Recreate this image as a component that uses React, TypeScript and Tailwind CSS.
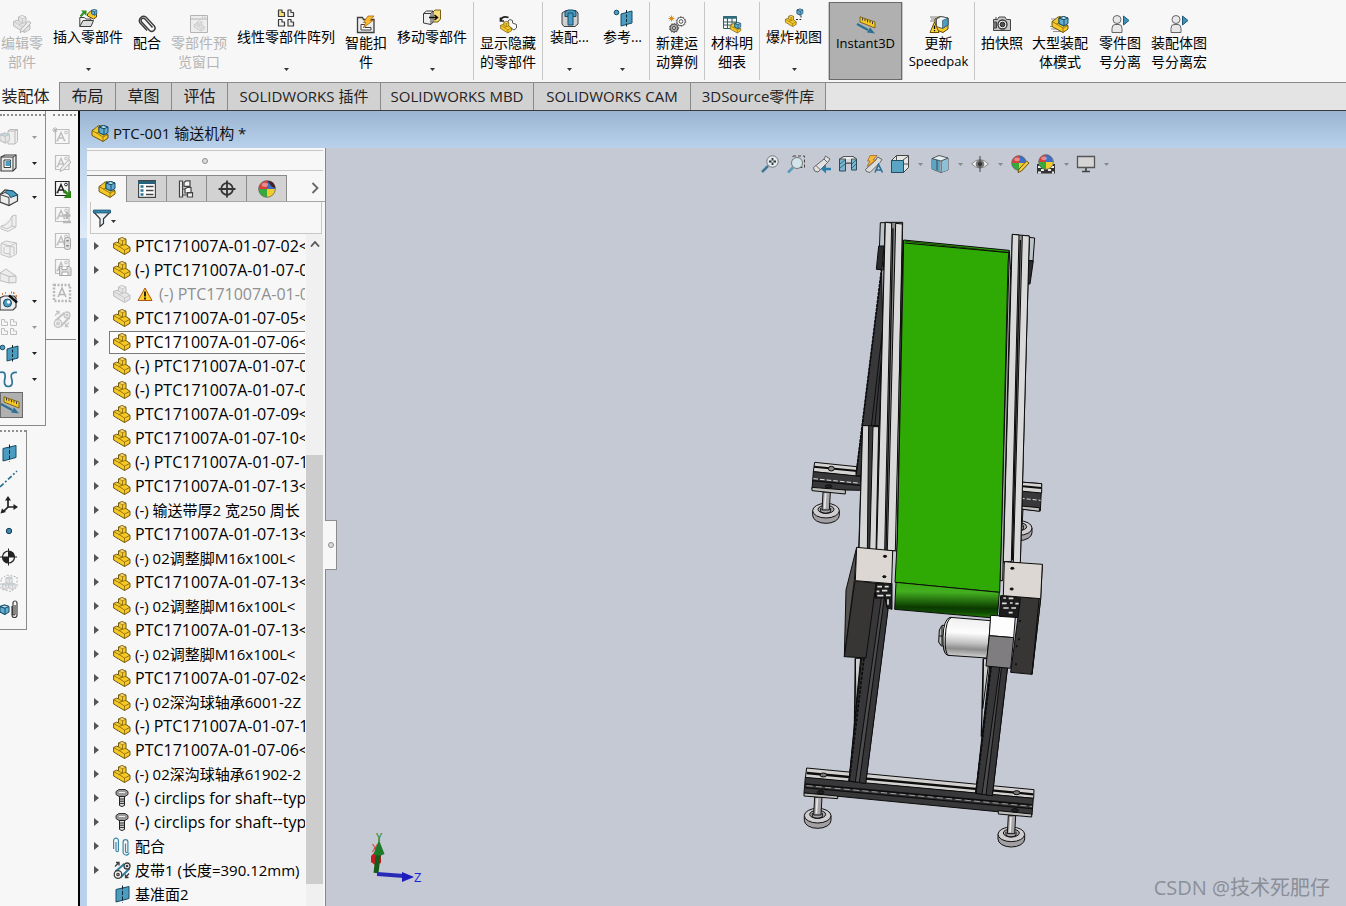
import type { ReactNode } from 'react'
import clsx from 'clsx'

const ink = '#3c3c3c'
const blue = '#4a9cc0'
const gold = '#f6c927'
const goldInk = '#5f4706'
const ghost = '#c4c4c4'

function Part({ muted = false }: { muted?: boolean }) {
  return (
    <g stroke={muted ? '#b5b5b5' : goldInk} strokeLinejoin="round">
      <path
        d="M5.500 2 9 .6 13 2.200V7.500l4 2.800v4L11.500 17.500 .6 11V6.500l3-1.300 1.900.6z"
        fill={muted ? '#e4e4e4' : gold}
        strokeWidth=".9"
      />
      <path d="M5.500 2 9 .6 13 2.200 9.500 3.600z" fill={muted ? '#f2f2f2' : '#fde178'} strokeWidth=".5" />
      <path d="M9.500 3.600v4.600L5.500 6M9.500 8.200 6 9.500 .6 6.500M9.500 8.200 13 7.500M6 9.500l5.500 3.500 5.500-2.700M11.500 13v4.500" fill="none" strokeWidth=".6" />
    </g>
  )
}

function Cube({ x = 0, y = 0, s = 1, fill = '#62add0', line = '#164d6b' }) {
  return (
    <g transform={`translate(${x} ${y}) scale(${s})`} stroke={line} strokeLinejoin="round">
      <path d="M0 1.500 4.500 0 9 1.500V7L5 9.500 0 7z" fill={fill} />
      <path d="M0 1.500 5 3.200v6.300L0 7z" fill={fill} />
      <path d="M0 1.500 4.500 0 9 1.500 5 3.200z" fill="#b9e0ef" />
    </g>
  )
}

const GhostCube = ({ x = 0, y = 0, s = 1 }) => <Cube x={x} y={y} s={s} fill="#e6e6e6" line={ghost} />

function Assembly() {
  return (
    <>
      <path d="M1 6.500 3.500 5 6 2.500 9 1.500l3 1.500v6l5 1.500V14l-5 3.500L1 11.500z" fill={gold} stroke={goldInk} strokeWidth=".9" strokeLinejoin="round" />
      <path d="M1 6.500 5.500 9 8 8M5.500 9l6.500 4 5-2.500M12 13v4.500" fill="none" stroke={goldInk} strokeWidth=".6" />
      <Cube x={8} y={1.5} />
    </>
  )
}

function Plane({ x = 0 }) {
  return (
    <g transform={`translate(${x} 0)`}>
      <path d="M3 4.500 16 1.500v12L3 17z" fill={blue} stroke="#1b4a63" />
      <path d="M9.500.5v17" stroke="#0f2735" strokeDasharray="4 1.500" />
    </g>
  )
}

function Ruler() {
  return (
    <>
      <path d="M3 .8 18 6v6L3 6z" fill={gold} stroke="#6a5212" strokeWidth=".8" />
      <path d="M5.500 2v2.500M8 3v2M10.500 3.800v2.500M13 4.700v2M15.500 5.600v2.500" stroke={ink} />
      <path d="M0 8l11 6" stroke="#2a6f96" strokeWidth="2" />
      <path d="M18 17.500l-8-1 3-5z" fill="#2a6f96" />
    </>
  )
}

function Mates() {
  return (
    <g fill="none" stroke="#3d87a8" strokeWidth="1.200">
      <path d="M3 5v8.500a1.200 1.200 0 002.400 0V3.500a2.400 2.400 0 00-4.800 0V12" />
      <path d="M12.500 6.500v8a1.200 1.200 0 002.400 0V5a2.400 2.400 0 00-4.800 0v9.500a3 3 0 006 1" />
    </g>
  )
}

function Belt({ muted = false }: { muted?: boolean }) {
  const c = muted ? ghost : ink
  const band = muted ? ghost : '#2f7c9f'
  return (
    <g fill="none" stroke={c} strokeWidth="1.300">
      <path d="M2.500 10.500 11.500 2.800M7.500 16.500l9-9" stroke={band} strokeWidth="2" />
      <circle cx="5" cy="13.500" r="3.800" fill={muted ? '#eee' : '#f4f4f4'} />
      <circle cx="5" cy="13.500" r="1.200" />
      <circle cx="14" cy="5" r="3" fill={muted ? '#eee' : '#f4f4f4'} />
      <circle cx="14" cy="5" r=".7" />
      <path d="M2 5.500 6 1.500M3 1.500h3v3M16 12.500l-3.500 4M12.500 13.500v3h3" />
    </g>
  )
}

function Clip({ x = 0 }) {
  return (
    <g transform={`translate(${x} 0)`} fill="none" stroke={ink} strokeWidth="1.200">
      <path d="M1 6v9a2.500 2.500 0 005 0V3a2 2 0 00-4 0v11a1 1 0 002 0V5" />
    </g>
  )
}

function Note({ c = '#bebebe', children }: { c?: string; children?: ReactNode }) {
  return (
    <>
      <path d="M2.500 1.500H16v14H2.500z" fill="none" stroke={c} strokeWidth="1.200" />
      <path d="M4.500 12.500 8 4.500l3.500 8M5.500 10h5M3.500 12.500h2M10.500 12.500h2" fill="none" stroke={c} strokeWidth="1.500" />
      <circle cx="13" cy="4.500" r="1.400" fill="none" stroke={c} />
      {children}
    </>
  )
}

function Ball({ x = 9, y = 9, r = 8 }) {
  return (
    <g transform={`translate(${x} ${y}) scale(${r / 8})`}>
      <path d="M0 0V-8A8 8 0 00-8 0z" fill="#d9403c" />
      <path d="M0 0V-8A8 8 0 018 0z" fill="#3e6fc4" />
      <path d="M0 0H-8A8 8 0 000 8z" fill="#35a93a" />
      <path d="M0 0H8A8 8 0 010 8z" fill="#f0cd2c" />
      <circle r="7.800" fill="none" stroke="#6b6b6b" strokeWidth=".8" />
      <ellipse cx="-2" cy="-4" rx="3" ry="2" fill="#fff" opacity=".4" />
    </g>
  )
}

function Person() {
  return (
    <>
      <circle cx="6" cy="4.500" r="4" fill="#e8e8e8" stroke="#666" />
      <path d="M1 17.500v-4Q1 9.500 4 9.500h4q3 0 3 4v4z" fill="#e8e8e8" stroke="#666" />
      <path d="M12.500 1 18 5.500 12.500 10z" fill="#3e92b8" stroke="#215a78" />
    </>
  )
}

function Pencil({ muted = true }: { muted?: boolean }) {
  return (
    <path d="M7 17.500l1-3.500 7.500-8 2.500 2-7.500 8z" fill={muted ? '#ececec' : '#f4cb3e'} stroke={muted ? '#b4b4b4' : '#6d5314'} />
  )
}

const glyphs: Record<string, ReactNode> = {
  part: <Part />,
  partMuted: <Part muted />,
  assembly: <Assembly />,
  editPart: (
    <>
      <Part muted />
      <Pencil />
    </>
  ),
  insert: (
    <>
      <path d="M.8 17.500V8.500h4.500l1.500 1.500h5v2" fill="#f5f5f5" stroke={ink} />
      <path d="M.8 17.500 4 11.500h10.500l-2.500 6z" fill="#ddd" stroke={ink} />
      <path d="M1.500 7.500 5 3.500" stroke="#2e9420" strokeWidth="2" />
      <path d="M2 1.500h5.500V7z" fill="#2e9420" />
      <path d="M8.500 5 12 1.500l5.500 1.500v5L14.500 10 8.500 7z" fill={gold} stroke={goldInk} />
      <Cube x={12.500} y={0.5} s={0.6} />
    </>
  ),
  clip: (
    <path d="M14.500 12.500 7 4a2.200 2.200 0 00-3.300 3l7.800 8.500a3.300 3.300 0 004.800-4.500L8 2A4.400 4.400 0 001.700 7.500L9 15.500" fill="none" stroke={ink} strokeWidth="1.400" />
  ),
  preview: (
    <>
      <path d="M.5.5h17v17H.5zM.5 4h17" fill="#ededed" stroke="#b4b4b4" />
      <path d="M12 2.200h1M14.500 2.200h1" stroke="#aaa" />
      <g transform="translate(4 5.500) scale(.6)"><Part muted /></g>
    </>
  ),
  pattern: (
    <g stroke={ink} strokeWidth="1.200" strokeLinejoin="round">
      <path d="M1.500 1h3.500v2.500h2.500v4h-6z" fill="#f8dc74" />
      <path d="M11 1h3v2.500h2.500v4H11zM1.500 10.500h3.500V13h2.500v4h-6zM11 10.500h3V13h2.500v4H11z" fill="#f2f2f2" />
    </g>
  ),
  patternMuted: (
    <path d="M1.500 1.500h3V4h3v3.500h-6zM10.500 1.500h3V4h3v3.500h-6zM1.500 10.500h3V13h3v3.500h-6zM10.500 10.500h3V13h3v3.500h-6z" fill="none" stroke="#bdbdbd" />
  ),
  fastener: (
    <>
      <path d="M.5 2.500h5l1 2h10.500v13H.5z" fill="#ececec" stroke={ink} strokeWidth="1.300" />
      <path d="M4 9.500h4v3h6V15H4z" fill="#fff" stroke={ink} />
      <path d="M11 1h6l-4 4.500h3L6 13l3-5.500H6.500z" fill="#f8bd2f" stroke="#b0641b" strokeWidth=".8" />
    </>
  ),
  move: (
    <>
      <path d="M9 4l3-3h5.500v9L15 13H9z" fill="#f5dc7c" stroke="#7b5f14" />
      <path d="M.5 4.500l3-2.500h6.500v11L8 15.500.5 14z" fill="#eee" stroke={ink} />
      <path d="M.5 4.500H8V15M8 4.500l2-2.500" fill="none" stroke={ink} />
      <path d="M6 8.500h8M11.500 6l3 2.500-3 2.500" fill="none" stroke="#111" strokeWidth="1.500" />
    </>
  ),
  showHide: (
    <>
      <path d="M2 6V4.500Q4 .5 9.500 2.500M1.500 2.500V6H5" fill="none" stroke="#222" strokeWidth="1.700" />
      <path d="M9 6l2-1.500 2.500 1V8l4 1.500v3.500L15 15l-6-4z" fill="#fafafa" stroke="#555" />
      <g transform="translate(1 6) scale(.68)"><Part /></g>
    </>
  ),
  features: (
    <>
      <path d="M1 4l4-2.500h10L17 4v11l-3 2.500H3L1 15z" fill="#cfcfcf" stroke={ink} />
      <path d="M4 3l3-2h5l3 2v4.500h-3V16H7V7.500H4z" fill={blue} stroke="#164d6b" />
      <path d="M7 7.500V4h5v3.500" fill="none" stroke="#164d6b" />
    </>
  ),
  reference: (
    <>
      <circle cx="2.500" cy="3.500" r="2.300" fill={blue} stroke="#1b4a63" />
      <path d="M7 5 18 2v12L7 17z" fill={blue} stroke="#1b4a63" />
      <path d="M12.500 1v16.500" stroke="#0f2735" strokeDasharray="3 1.500" />
    </>
  ),
  motion: (
    <>
      <circle cx="13" cy="6.500" r="4.200" fill="#f4f4f4" stroke="#555" />
      <circle cx="13" cy="6.500" r="4.800" fill="none" stroke="#666" strokeDasharray="1.500 1.500" />
      <circle cx="13" cy="6.500" r="1.800" fill="#fff" stroke="#555" />
      <circle cx="6" cy="13" r="4" fill="#a5a5a5" stroke="#555" />
      <circle cx="6" cy="13" r="4.600" fill="none" stroke="#555" strokeDasharray="1.500 1.500" />
      <circle cx="6" cy="13" r="1.500" fill="#eee" stroke="#444" />
      <path d="M3.500.5v6M.5 3.500h6M1.500 1.500l4 4M5.500 1.500l-4 4" stroke="#e08a1e" />
    </>
  ),
  bom: (
    <>
      <path d="M.5 1.500h13v12H.5z" fill="#f2f7f7" stroke="#3b5a5e" />
      <path d="M.5 2.500h13" stroke="#2e6f7f" strokeWidth="2.500" />
      <path d="M.5 7h13M.5 10h13M4.500 3v10.500M9 3v10.500" stroke="#3b5a5e" />
      <g transform="translate(6.500 6.500) scale(.66)"><Assembly /></g>
    </>
  ),
  explode: (
    <>
      <g transform="translate(0 6) scale(.66)"><Part /></g>
      <path d="M11 10.500h5V6" fill="none" stroke="#222" strokeDasharray="2 1.500" />
      <Cube x={12} y={0} s={0.65} />
    </>
  ),
  ruler: <Ruler />,
  speedpak: (
    <>
      <path d="M0 2h9M1 4h6M0 6h5" stroke="#666" strokeWidth=".8" />
      <path d="M5 4l5-2.500L18 3v11l-5 3.500-8-3z" fill={gold} stroke={goldInk} />
      <path d="M6.500 4l4.500-2.500 7 1.500v7l-5.500 3.500-6-2z" fill="#eef5f8" stroke="#345" strokeWidth=".8" />
      <path d="M12.500 5.500 18 3v7l-5.500 3.500z" fill={blue} stroke="#345" strokeWidth=".6" />
      <path d="M4.500 7 9 17.500H0z" fill="#fcd83a" stroke="#6d4b00" />
      <path d="M4.500 10.500v3.500M4.500 15v1.200" stroke="#000" strokeWidth="1.300" />
    </>
  ),
  camera: (
    <>
      <path d="M.5 4.500h4L6 2h6l1.500 2.500h4v11H.5z" fill="#c9c9c9" stroke="#444" />
      <path d="M2 3h2M.5 7h3v6h-3" stroke="#444" fill="#777" />
      <circle cx="9.500" cy="9.500" r="4.500" fill="#eee" stroke="#333" strokeWidth="1.300" />
      <circle cx="9.500" cy="9.500" r="2.300" fill="#555" stroke="#222" />
    </>
  ),
  largeAsm: (
    <>
      <path d="M0 4h6M-1 11.500h6M0 14h8M2 16.500h8" stroke="#777" strokeWidth=".8" />
      <Assembly />
    </>
  ),
  person: <Person />,
  solidMuted: (
    <>
      <path d="M8 3l2-1.500h7.500v12L15 16H8z" fill="#efefef" stroke="#bbb" />
      <path d="M8 3h7v13M15 3l2.500-1.500" fill="none" stroke="#bbb" />
      <GhostCube x={0} y={5} s={1.05} />
    </>
  ),
  window: (
    <>
      <path d="M1 3l4-2h11v13l-3 3H1z" fill="#e9e9e9" stroke={ink} strokeWidth="1.200" />
      <path d="M1 3h12v14M13 3l3-2" fill="none" stroke={ink} />
      <path d="M4 6h6.500v7.500H4z" fill="#fff" stroke={ink} />
      <path d="M5.500 7h5v5h-5z" fill={blue} />
    </>
  ),
  fillet: (
    <>
      <path d="M0 6.500 5 2l8 1 4.500 4v6L9 17.500 0 14z" fill="#ececec" stroke={ink} strokeWidth="1.200" />
      <path d="M7 2.200 13 3l4.500 4-7 2.500Q9.500 5.500 5 4.500z" fill={blue} stroke="#1b4a63" />
      <path d="M0 6.500 9 9.500v8M5 4.500 0 6.500" fill="none" stroke={ink} />
    </>
  ),
  ribMuted: <path d="M1 12Q9 11 12 2l4-1v12l-8 4.500L1 15zM12 2v10l-5 3-6-3M12 12l4 1" fill="#efefef" stroke={ghost} />,
  shellMuted: <path d="M1 3.500 6 1l10.500 2v11L10 17.500 1 14.500zM1 3.500 10 6v11.500M10 6l6.500-3M4 7v6l6 1M5 6l9 1v7" fill="#efefef" stroke={ghost} />,
  draftMuted: <path d="M0 7l6-4 10 7v6.500L9 17 0 14.500zM0 7l9 3.500V17M9 10.500l7-.5" fill="#ececec" stroke="#bdbdbd" />,
  wizard: (
    <>
      <path d="M0 6l4-2h10l2 2v9l-3 3H0z" fill="#eee" stroke={ink} strokeWidth="1.200" />
      <circle cx="7.500" cy="11" r="4" fill={blue} stroke="#1b4a63" />
      <circle cx="8.500" cy="10" r="1.700" fill="#fff" />
      <path d="M9 3.500 17 10.500" stroke="#111" strokeWidth="2.500" />
      <path d="M2 2h1M5 .8h1M13 1h1.500M15.500 4h1.500M11 .5h1" stroke="#e2742b" strokeWidth="1.800" />
    </>
  ),
  curve: <path d="M0 2.500Q6 .5 5 8q-2 8 3 8.500 6 0 3.500-8.500Q10 2 17 2.500" fill="none" stroke="#2f7498" strokeWidth="1.700" />,
  noteNew: <Note><path d="M2 -1v6M-1 2h6M0 0l4 4M4 0L0 4" stroke="#b0b0b0" strokeWidth=".8" /></Note>,
  noteEdit: <Note><Pencil /></Note>,
  noteAdd: (
    <Note c="#222">
      <path d="M11 10.500l3.500 3.500" stroke="#2a8a10" strokeWidth="2.500" />
      <path d="M18 10.500v7.500h-7.500z" fill="#2a8a10" />
    </Note>
  ),
  notePlus: <Note><path d="M14 6v7M10.500 9.500h7M10 16h8" stroke="#b6b6b6" strokeWidth="2.300" /></Note>,
  noteLight: (
    <Note>
      <rect x="11.500" y="5.500" width="6" height="12" rx="2" fill="#ddd" stroke="#a8a8a8" />
      <path d="M14.500 8v1.500M14.500 13v1.500" stroke="#888" strokeWidth="2.500" />
    </Note>
  ),
  noteSave: (
    <Note>
      <path d="M6.500 8.500h10l1.500 1.500v7.500H6.500z" fill="#ddd" stroke="#a8a8a8" />
      <path d="M9 8.500v3h5v-3M9 17v-3h6v3" fill="#fff" stroke="#a8a8a8" />
    </Note>
  ),
  noteStamp: (
    <>
      <path d="M1 1h16v16H1z" fill="none" stroke="#b8b8b8" strokeWidth="2.500" strokeDasharray="2 1.500" />
      <path d="M5 13l4-9 4 9M6 10.500h6" fill="none" stroke="#b4b4b4" strokeWidth="1.500" />
    </>
  ),
  beltMuted: <Belt muted />,
  belt: <Belt />,
  plane: <Plane />,
  axis: <path d="M0 17 17 1" stroke="#2a6f96" strokeWidth="1.700" strokeDasharray="5 2 2 2" />,
  coords: (
    <>
      <path d="M8 11V3M8 11h7M8 11l-5 5" stroke="#222" strokeWidth="1.700" />
      <path d="M8 0l3 4.500H5zM18 11l-4.500 3V8zM.5 17.500l1.500-5 4 3.500z" fill="#222" />
    </>
  ),
  point: <circle cx="9" cy="9" r="2.700" fill="#3f86a8" stroke="#163f57" />,
  mass: (
    <>
      <circle cx="8.500" cy="9" r="6" fill="#f4f4f4" stroke="#222" strokeWidth="1.200" />
      <path d="M8.500 9V3a6 6 0 016 6zM8.500 9v6a6 6 0 01-6-6z" fill="#222" />
      <path d="M8.500.5v17M0 9h17" stroke="#222" />
    </>
  ),
  boxMuted: (
    <>
      <path d="M1 5l6-4 10 2v10l-6 4.500L1 15z" fill="none" stroke="#b4b4b4" strokeDasharray="2 1.500" />
      <GhostCube x={6} y={3} s={0.7} />
      <GhostCube x={2.500} y={9} s={0.7} />
      <GhostCube x={9} y={9} s={0.7} />
    </>
  ),
  cubeClip: (
    <>
      <Cube x={0} y={5} />
      <Clip x={11} />
    </>
  ),
  propTab: (
    <>
      <path d="M.6.6h16.800v16.800H.6z" fill="#fff" stroke="#444" strokeWidth="1.200" />
      <path d="M0 2.500h18" stroke="#26617c" strokeWidth="3" />
      <path d="M2.500 6.500h3M2.500 10.500h3M2.500 14.500h3" stroke="#2c7697" strokeWidth="2.500" />
      <path d="M8 6.500h7.500M8 10.500h7.500M8 14.500h7.500" stroke="#444" strokeWidth="1.300" />
    </>
  ),
  configTab: (
    <g fill="#f6f6f6" stroke="#444" strokeWidth="1.200">
      <path d="M3 9h5M3 15h7" fill="none" />
      <path d="M1.500 1h3v16h-3z" />
      <path d="M6 2.500 8 .8h4v5.500H6zM7 9l2-1.500h4V13H7zM9.500 12.500h5V17h-5z" />
    </g>
  ),
  dimTab: (
    <g fill="none" stroke="#333" strokeWidth="1.800">
      <circle cx="9" cy="9" r="5.800" />
      <path d="M9 .5v17M.5 9h17" />
    </g>
  ),
  displayTab: (
    <>
      <Ball r={8.5} />
      <path d="M9.500 1Q16 0 17.500 8l-3.500-1z" fill="#4a2020" />
    </>
  ),
  bolt: (
    <>
      <path d="M3 2.500 6 .5h6l3 2v3L12 7.500H6L3 5.500z" fill="#9a9a9a" stroke="#333" />
      <path d="M6 3.500h6" stroke="#eee" />
      <path d="M6.500 7.500h5v9L9 17.500l-2.500-1z" fill="#ddd" stroke="#222" />
      <path d="M6.500 10h5M6.500 12.200h5M6.500 14.400h5" stroke="#222" />
    </>
  ),
  mates: <Mates />,
  funnel: (
    <>
      <path d="M.8 3 7 9.800V17.500l3.500-3V9.800L17 3z" fill="#e9f0f3" stroke="#333" strokeWidth="1.200" />
      <path d="M.5 1h17v3H.5z" fill="#3285ad" stroke="#1b4a63" strokeWidth=".7" />
    </>
  ),
  zoomFit: (
    <>
      <circle cx="11.500" cy="6.500" r="5.700" fill="#e3ecf2" stroke="#777" />
      <path d="M11.500 3v7M8 6.500h7" stroke="#333" strokeDasharray="2.500 2" strokeWidth="1.800" />
      <path d="M7 11 1 17" stroke="#3d7897" strokeWidth="2.500" />
    </>
  ),
  zoomArea: (
    <>
      <path d="M6 1h11.500v11.500H6z" fill="none" stroke="#444" strokeDasharray="3 2" />
      <circle cx="10" cy="8" r="5.500" fill="#d3e3ea" stroke="#777" />
      <path d="M6 12.500 1 17.500" stroke="#5b9abb" strokeWidth="2.500" />
    </>
  ),
  prevView: (
    <>
      <path d="M.5 12.500 11 4l1.500-3 4.500 3-2 3L5 17l-3.500-1z" fill="#e2e2e2" stroke="#666" />
      <path d="M11 4l3.500 3.500M3 10.500l4.500 4.500" stroke="#666" />
      <path d="M12 14h6" stroke="#2a7dab" strokeWidth="2.500" />
      <path d="M8 14l5-4.500v9z" fill="#2a7dab" />
    </>
  ),
  section: (
    <>
      <path d="M.5 4 5 1.500h9L17.500 4v11h-5V8h-6v8H.5z" fill="#7fb3cb" stroke="#2b4a5a" />
      <path d="M.5 4 5 1.500h9L17.500 4h-5l-1.500 1H8L6.500 4z" fill="#eee" stroke="#444" strokeWidth=".8" />
      <path d="M6.500 4v4h6V4" fill="#d8d8d8" stroke="#444" />
      <path d="M1 9l5-4M1 13l5-4M13 9l4-4M13 13l4-4" stroke="#2a6d8e" />
    </>
  ),
  annotate: (
    <>
      <path d="M.5 14.500 11 5l1.500-3L17 4.500l-2 3L5 17.500l-3.500-1z" fill="#ddd" stroke="#666" />
      <path d="M5 .5h7L8 5h3l-9 6.500L5 6H2.500z" fill="#f6b93b" stroke="#a8681e" strokeWidth=".8" />
      <path d="M10 17.500l3.500-8 4 8M11.500 15h4.500" fill="none" stroke="#2c6d94" strokeWidth="1.600" />
    </>
  ),
  orient: (
    <>
      <path d="M.5 5.500 5.500.5h12v12l-5 5H.5z" fill="#e6e6e6" stroke="#444" />
      <path d="M5.500.5v5M12 5l5.500-4M12 9h5.500" stroke="#555" />
      <path d="M.5 5.500h12v12H.5z" fill="#5ba4c4" stroke="#234f66" />
    </>
  ),
  display: (
    <>
      <path d="M1 3.500 8 .5l9 2.500v12l-7 2.500L1 14z" fill="#e6f0f4" stroke="#333" strokeWidth=".8" />
      <path d="M1 3.500 9 6v11L1 14z" fill="#5ba4c4" />
      <path d="M10 6l7-3v12l-7 2.500z" fill="#8cc0d6" />
      <path d="M1 3.500 10 6v11.500M10 6l7-3M6 5V15.500" fill="none" stroke="#333" strokeWidth=".8" />
    </>
  ),
  eye: (
    <>
      <path d="M.5 9Q9 0 17.500 9 9 17 .5 9z" fill="#eee" stroke="#888" />
      <circle cx="9" cy="9" r="4.300" fill="#777" />
      <circle cx="9" cy="9" r="2" fill="#222" />
      <path d="M9 1v16" stroke="#444" />
    </>
  ),
  appearance: (
    <>
      <Ball x={8} y={8} r={7.5} />
      <Pencil muted={false} />
    </>
  ),
  scene: (
    <>
      <path d="M0 9h18v9.500H0z" fill="#333" />
      <path d="M1 12h3M7 12h3M14 12h3M4 15h3M11 15h3M1 17.500h3M15 17.500h2" stroke="#eee" strokeWidth="2" />
      <Ball x={9} y={7} r={7.5} />
    </>
  ),
  monitor: (
    <>
      <path d="M.5 1.500h17v11H.5z" fill="#d5d5d5" stroke="#555" strokeWidth="1.300" />
      <path d="M9 13v3M5 16.500h8" stroke="#444" strokeWidth="1.700" />
    </>
  ),
}

function Icon({ name, className = 'size-[18px]' }: { name: string; className?: string }) {
  return (
    <svg viewBox="0 0 18 18" className={clsx('shrink-0 overflow-visible', className)} aria-hidden="true">
      {glyphs[name]}
    </svg>
  )
}

function Caret({ className = 'text-[#333]' }: { className?: string }) {
  return (
    <svg viewBox="0 0 5 3" className={clsx('h-[3px] w-[5px] shrink-0', className)} aria-hidden="true">
      <path d="M0 0h5L2.500 3z" fill="currentColor" />
    </svg>
  )
}

type RibbonItem = {
  icon: string
  lines: string[]
  width: string
  menu?: boolean
  disabled?: boolean
  active?: boolean
}

const ribbon: RibbonItem[][] = [
  [
    { icon: 'editPart', lines: ['编辑零', '部件'], width: 'w-[44px]', disabled: true },
    { icon: 'insert', lines: ['插入零部件'], width: 'w-[88px]', menu: true },
    { icon: 'clip', lines: ['配合'], width: 'w-[30px]' },
    { icon: 'preview', lines: ['零部件预', '览窗口'], width: 'w-[74px]', disabled: true },
    { icon: 'pattern', lines: ['线性零部件阵列'], width: 'w-[100px]', menu: true },
    { icon: 'fastener', lines: ['智能扣', '件'], width: 'w-[60px]' },
    { icon: 'move', lines: ['移动零部件'], width: 'w-[72px]', menu: true },
  ],
  [{ icon: 'showHide', lines: ['显示隐藏', '的零部件'], width: 'w-[68px]' }],
  [
    { icon: 'features', lines: ['装配...'], width: 'w-[53px]', menu: true },
    { icon: 'reference', lines: ['参考...'], width: 'w-[53px]', menu: true },
  ],
  [{ icon: 'motion', lines: ['新建运', '动算例'], width: 'w-[54px]' }],
  [{ icon: 'bom', lines: ['材料明', '细表'], width: 'w-[54px]' }],
  [{ icon: 'explode', lines: ['爆炸视图'], width: 'w-[68px]', menu: true }],
  [{ icon: 'ruler', lines: ['Instant3D'], width: 'w-[73px]', active: true }],
  [{ icon: 'speedpak', lines: ['更新', 'Speedpak'], width: 'w-[71px]' }],
  [
    { icon: 'camera', lines: ['拍快照'], width: 'w-[54px]' },
    { icon: 'largeAsm', lines: ['大型装配', '体模式'], width: 'w-[62px]' },
    { icon: 'person', lines: ['零件图', '号分离'], width: 'w-[58px]' },
    { icon: 'person', lines: ['装配体图', '号分离宏'], width: 'w-[60px]' },
  ],
]

const commandTabs = [
  { label: '装配体', className: 'w-[60px] text-base bg-[#f7f7f7] -mt-px pr-2' },
  { label: '布局', className: 'w-[56px] text-base' },
  { label: '草图', className: 'w-[56px] text-base' },
  { label: '评估', className: 'w-[56px] text-base' },
  { label: 'SOLIDWORKS 插件', className: 'w-[153px] text-[15px]' },
  { label: 'SOLIDWORKS MBD', className: 'w-[153px] text-[15px]' },
  { label: 'SOLIDWORKS CAM', className: 'w-[157px] text-[15px]' },
  { label: '3DSource零件库', className: 'w-[135px] text-[15px]' },
]

type Tool = { icon: string; label: string; caret?: 'on' | 'off'; rule?: boolean; active?: boolean }

const featureTools: Tool[] = [
  { icon: 'solidMuted', label: '拉伸凸台', caret: 'off' },
  { icon: 'window', label: '拉伸切除', caret: 'on', rule: true },
  { icon: 'fillet', label: '圆角', caret: 'on' },
  { icon: 'ribMuted', label: '筋' },
  { icon: 'shellMuted', label: '抽壳' },
  { icon: 'draftMuted', label: '拔模' },
  { icon: 'wizard', label: '异型孔向导', caret: 'on' },
  { icon: 'patternMuted', label: '线性阵列', caret: 'off' },
  { icon: 'reference', label: '参考几何体', caret: 'on' },
  { icon: 'curve', label: '曲线', caret: 'on' },
  { icon: 'ruler', label: 'Instant3D', active: true },
]

const blockTools: Tool[] = [
  { icon: 'noteNew', label: '制作块' },
  { icon: 'noteEdit', label: '编辑块' },
  { icon: 'noteAdd', label: '插入块' },
  { icon: 'notePlus', label: '添加/移除' },
  { icon: 'noteLight', label: '重建块' },
  { icon: 'noteSave', label: '保存块' },
  { icon: 'noteStamp', label: '爆炸块' },
  { icon: 'beltMuted', label: '皮带/链' },
]

const referenceTools: Tool[] = [
  { icon: 'plane', label: '基准面' },
  { icon: 'axis', label: '基准轴' },
  { icon: 'coords', label: '坐标系' },
  { icon: 'point', label: '点' },
  { icon: 'mass', label: '质心' },
  { icon: 'boxMuted', label: '边界框' },
  { icon: 'cubeClip', label: '配合参考' },
]

const panelTabs = [
  { icon: 'assembly', label: 'FeatureManager' },
  { icon: 'propTab', label: 'PropertyManager' },
  { icon: 'configTab', label: 'ConfigurationManager' },
  { icon: 'dimTab', label: 'DimXpertManager' },
  { icon: 'displayTab', label: 'DisplayManager' },
]

type Node = { text: string; icon?: string; leaf?: boolean; warning?: boolean; selected?: boolean; small?: boolean }

const tree: Node[] = [
  { text: 'PTC171007A-01-07-02<' },
  { text: '(-) PTC171007A-01-07-0' },
  { text: '(-) PTC171007A-01-0', icon: 'partMuted', leaf: true, warning: true },
  { text: 'PTC171007A-01-07-05<' },
  { text: 'PTC171007A-01-07-06<', selected: true },
  { text: '(-) PTC171007A-01-07-0' },
  { text: '(-) PTC171007A-01-07-0' },
  { text: 'PTC171007A-01-07-09<' },
  { text: 'PTC171007A-01-07-10<' },
  { text: '(-) PTC171007A-01-07-1' },
  { text: 'PTC171007A-01-07-13<' },
  { text: '(-) 输送带厚2 宽250 周长', small: true },
  { text: 'PTC171007A-01-07-13<' },
  { text: '(-) 02调整脚M16x100L<', small: true },
  { text: 'PTC171007A-01-07-13<' },
  { text: '(-) 02调整脚M16x100L<', small: true },
  { text: 'PTC171007A-01-07-13<' },
  { text: '(-) 02调整脚M16x100L<', small: true },
  { text: 'PTC171007A-01-07-02<' },
  { text: '(-) 02深沟球轴承6001-2Z', small: true },
  { text: '(-) PTC171007A-01-07-1' },
  { text: 'PTC171007A-01-07-06<' },
  { text: '(-) 02深沟球轴承61902-2', small: true },
  { text: '(-) circlips for shaft--typ', icon: 'bolt' },
  { text: '(-) circlips for shaft--typ', icon: 'bolt' },
  { text: '配合', icon: 'mates', small: true },
  { text: '皮带1 (长度=390.12mm)', icon: 'belt', small: true },
  { text: '基准面2', icon: 'plane', leaf: true, small: true },
]

const viewTools = [
  { icon: 'zoomFit', label: '整屏显示全图' },
  { icon: 'zoomArea', label: '局部放大' },
  { icon: 'prevView', label: '上一视图' },
  { icon: 'section', label: '剖面视图' },
  { icon: 'annotate', label: '动态注解视图' },
  { icon: 'orient', label: '视图定向', caret: true },
  { icon: 'display', label: '显示样式', caret: true },
  { icon: 'eye', label: '隐藏/显示项目', caret: true },
  { icon: 'appearance', label: '编辑外观' },
  { icon: 'scene', label: '应用布景', caret: true },
  { icon: 'monitor', label: '视图设定', caret: true },
]

function RibbonButton({ item }: { item: RibbonItem }) {
  return (
    <button
      type="button"
      disabled={item.disabled}
      className={clsx(
        'flex h-[78px] shrink-0 flex-col items-center whitespace-nowrap text-sm leading-[19px]',
        item.width,
        item.menu ? 'pt-[7px]' : 'pt-[13px]',
        item.disabled ? 'text-[#b4b4b4]' : 'text-black',
        item.active && 'border border-[#6a6a6a] bg-[#b0b0b0]',
      )}
    >
      <Icon name={item.icon} />
      {item.lines.map((line) => (
        <span key={line} className={clsx('block', /^[A-Z]/.test(line) && 'text-[13px]')}>
          {line}
        </span>
      ))}
      {item.menu && <Caret className="mt-auto mb-[9px] text-[#333]" />}
    </button>
  )
}

function Ribbon() {
  return (
    <div className="flex h-[82px] overflow-hidden pt-0.5">
      {ribbon.map((group, i) => (
        <div
          key={i}
          className={clsx(
            'flex h-[78px] border-r border-[#c6c6c6] last:border-r-0',
            i === 0 && 'pr-[5px]',
          )}
        >
          {group.map((item) => (
            <RibbonButton key={item.lines[0]} item={item} />
          ))}
        </div>
      ))}
    </div>
  )
}

function ToolColumn({ tools, className }: { tools: Tool[]; className: string }) {
  return (
    <div className={clsx('border-[#8a8a8a] pb-[7px]', className)}>
      <div className="mt-[3px] mb-2 border-t-2 border-dotted border-[#8f8f8f]" />
      {tools.map((tool) => (
        <div key={tool.label} className={clsx(tool.rule && 'mb-[5px] border-b border-[#8a8a8a] pb-0.5')}>
          <button
            type="button"
            aria-label={tool.label}
            className={clsx(
              'flex h-[26px] items-center',
              tool.active && 'w-[23px] border border-[#6a6a6a] bg-[#b0b0b0]',
            )}
          >
            <Icon name={tool.icon} />
            {tool.caret && (
              <Caret className={clsx('ml-[14px]', tool.caret === 'on' ? 'text-[#222]' : 'text-[#999]')} />
            )}
          </button>
        </div>
      ))}
    </div>
  )
}

function TreeRow({ node }: { node: Node }) {
  return (
    <li className="flex h-6 items-center overflow-hidden">
      <span className="w-[22px] shrink-0 pl-[7px]">
        {!node.leaf && (
          <svg viewBox="0 0 5 8" className="h-2 w-[5px]" aria-hidden="true">
            <path d="M0 0l5 4-5 4z" fill="#555" />
          </svg>
        )}
      </span>
      <button
        type="button"
        className={clsx(
          'flex h-[23px] min-w-0 flex-1 items-center border pl-[3px] text-left whitespace-nowrap',
          node.selected ? 'border-r-0 border-[#7a7a7a] bg-white' : 'border-transparent',
          node.warning ? 'text-[#8f8f8f]' : 'text-black',
        )}
      >
        <Icon name={node.icon ?? 'part'} />
        {node.warning && (
          <svg viewBox="0 0 16 14" className="ml-1.5 h-[14px] w-4 shrink-0" aria-hidden="true">
            <path d="M8 1l7 12.500H1z" fill="#fcd12c" stroke="#b3531b" strokeLinejoin="round" />
            <path d="M8 4.500v5M8 10.500v2" stroke="#111" strokeWidth="1.800" />
          </svg>
        )}
        <span className={clsx('leading-[22px]', node.warning ? 'ml-1.5' : 'ml-1', node.small ? 'text-[15px]' : 'text-base')}>
          {node.text}
        </span>
      </button>
    </li>
  )
}

function FeaturePanel() {
  return (
    <aside className="relative z-10 flex w-[239px] shrink-0 flex-col border-r border-[#85878c] bg-[#f7f7f7]">
      <div className="mt-[2px] mr-0.5 flex h-[21px] items-center justify-center border-y border-[#c6c6c6]">
        <span className="size-1.5 rounded-full border border-[#8d8d8d] bg-[#ddd]" />
      </div>
      <div className="mt-1 flex h-[27px] border-b border-[#a5a5a5]" role="tablist">
        {panelTabs.map((tab, i) => (
          <button
            key={tab.label}
            type="button"
            role="tab"
            aria-selected={i === 0}
            aria-label={tab.label}
            className={clsx(
              'flex w-10 items-center justify-center border-t border-r border-[#8a8a8a]',
              i === 0 ? 'h-[27px] bg-[#f7f7f7]' : 'bg-[#d2d2d2]',
            )}
          >
            <Icon name={tab.icon} />
          </button>
        ))}
        <button type="button" aria-label="更多" className="ml-auto pr-1.5">
          <svg viewBox="0 0 8 12" className="h-3 w-2" aria-hidden="true">
            <path d="M1.500 1 6.500 6l-5 5" fill="none" stroke="#666" strokeWidth="1.800" />
          </svg>
        </button>
      </div>
      <div className="mr-[3px] ml-[3px] flex h-8 items-center border border-t-0 border-[#c6c6c6] px-0.5">
        <button type="button" aria-label="过滤器" className="flex items-center">
          <Icon name="funnel" />
          <Caret className="mt-2 text-[#333]" />
        </button>
        <input aria-label="过滤" className="h-6 min-w-0 flex-1 bg-transparent px-2 text-sm outline-none" />
      </div>
      <div className="flex flex-1">
        <ul className="w-[218px] shrink-0">
          {tree.map((node, i) => (
            <TreeRow key={i} node={node} />
          ))}
        </ul>
        <div className="ml-px flex w-[17px] flex-col bg-[#f0f0f0]">
          <button type="button" aria-label="向上滚动" className="flex h-5 items-center justify-center">
            <svg viewBox="0 0 10 6" className="h-1.5 w-2.5" aria-hidden="true">
              <path d="M1 5.500 5 1l4 4.500" fill="none" stroke="#555" strokeWidth="1.800" />
            </svg>
          </button>
          <div className="mt-[201px] mb-[22px] flex-1 bg-[#cdcdcd]" />
        </div>
      </div>
      <button
        type="button"
        aria-label="折叠面板"
        className="absolute top-[372px] -right-3 flex h-[50px] w-3 items-center justify-center border border-l-0 border-[#8d8d8d] bg-[#f7f7f7]"
      >
        <span className="size-1.5 rounded-full border border-[#8d8d8d] bg-[#ddd]" />
      </button>
    </aside>
  )
}

function Foot({ x, y }: { x: number; y: number }) {
  return (
    <g transform={`translate(${x} ${y})`} stroke="#111" strokeWidth="3">
      <path d="M-40 0v14a40 24 0 0080 0V0z" fill="#a3a0a4" />
      <ellipse rx="40" ry="22" fill="#cfcdcf" />
      <ellipse cy="-4" rx="24" ry="12" fill="#a9a7a9" />
      <path d="M-9-56h22l-3 54h-22z" fill="#a8a6a8" />
      <path d="M-1-52l-3 46" stroke="#e8e8e8" strokeWidth="5" />
      <path d="M-16-8v11q14 10 30 0V-8" fill="none" />
    </g>
  )
}

function TopRails() {
  return (
    <g stroke="#0c0c0c" strokeWidth="3" strokeLinejoin="round">
      {/* rear cross bar and its feet */}
      <Foot x={78} y={902} />
      <path d="M44 757 180 771v29L40 785z" fill="#d4d3d2" />
      <path d="M42 770l130 13" strokeWidth="6" />
      <ellipse cx="94" cy="776" rx="9" ry="7" fill="#8a8a8a" />
      <path d="M40 785l142 14v42l-146-3z" fill="#38383a" />
      <path d="M40 806l142 14" stroke="#ddd" strokeDasharray="14 6" />
      <path d="M38 812l142 14" strokeWidth="4" />
      <path d="M36 832l100 8v12l-100-10z" fill="#bdbdbb" />
      <ellipse cx="86" cy="829" rx="10" ry="5" fill="#222" />
      <Foot x={656} y={954} />
      <path d="M660 816l65 5-4 82-61-6z" fill="#38383a" />
      <path d="M660 816l65 5v28l-65-6z" fill="#d4d3d2" />
      <path d="M660 828l64 6" strokeWidth="6" />
      <path d="M662 865l60 6" stroke="#ddd" strokeDasharray="12 6" />
      <path d="M662 888l56 5v11l-56-7z" fill="#bdbdbb" />

      {/* rear leg */}
      <path d="M245 178 168 797h18l6-150h46l10-300z" fill="#38383b" />
      <path d="M245 175 168 797" strokeDasharray="9 3" strokeWidth="5" />
      <path d="M250 340 214 650M247 420 224 650" />
      <path d="M188 647h50l-8 375h-54z" fill="#3a3a3a" />
      <path d="M188 647h18l-4 375h-25zM219 650h17l-8 372h-19z" fill="#d6d6d6" />

      {/* left rail */}
      <path d="M241 38h15l-6 142-14-2z" fill="#bcc4ca" />
      <path d="M236 108h16l-6 71-17-1z" fill="#2c2c2e" />
      <path d="M256 37h52l-18 985h-58z" fill="#8c8c8c" />
      <path d="M256 37l19 2-21 983h-24zM287 40l20 2-19 980h-26z" fill="#dadada" />
      <path d="M279 55l-21 965" strokeWidth="4" />
      <path d="M311 90l-3 65-17 867h-5l20-870z" fill="#b5bdb5" />

      {/* right rail */}
      <path d="M688 82l16 2-5 68h-14z" fill="#bcc4ca" />
      <path d="M684 152h16l-10 70h-8z" fill="#2c2c2e" />
      <path d="M637 73l51 5-27 980h-53z" fill="#8c8c8c" />
      <path d="M637 73l20 2-23 980h-24zM667 76l21 2-27 980h-21z" fill="#dadada" />
      <path d="M661 90l-24 960" strokeWidth="4" />
      <path d="M628 122l4 60-24 930h-8z" fill="#aab2aa" />

      <path d="M311 90l316 31-3 40-20 829-5 157-314-30 7-127 18-840z" fill="#2faa04" />
      <path d="M314 99l312 29" />
      <path d="M316 94l308 33" strokeWidth="2" />
    </g>
  )
}

function LowerFrame() {
  return (
    <g transform="translate(-30 960)" stroke="#0c0c0c" strokeWidth="3" strokeLinejoin="round">
      {/* front base beam */}
      <Foot x={83} y={857} />
      <Foot x={664} y={913} />
      <path d="M50 714l682 65-1 26L46 744z" fill="#d2d1cf" />
      <path d="M50 729l680 64" strokeWidth="7" />
      <path d="M46 742l684 63-4 50L42 789z" fill="#38383a" />
      <path d="M46 762l682 63" strokeWidth="5" />
      <path d="M50 767l676 62" stroke="#d0d0d0" strokeDasharray="18 10" strokeWidth="2" />
      <path d="M46 773l680 63" strokeWidth="4" />
      <path d="M42 789l101 9v8l-101-8zM625 842l100 10v9l-100-9z" fill="#bdbdbb" />
      <ellipse cx="100" cy="735" rx="10" ry="6" fill="#777" />
      <ellipse cx="680" cy="788" rx="10" ry="6" fill="#777" />
      <ellipse cx="92" cy="787" rx="10" ry="5" fill="#222" />
      <ellipse cx="675" cy="841" rx="10" ry="5" fill="#222" />

      {/* legs */}
      <path d="M196 385h18l-16 150z" fill="#cfcfcf" />
      <path d="M196 385l-3 225" strokeWidth="4" />
      <path d="M254 190h48l-9 50-66 520-50-7 35-370z" fill="#4c4c4f" />
      <path d="M254 190h22l-80 566-19-3 38-370zM284 195l10 45-67 520-19-2z" fill="#37373a" />
      <path d="M222 384 178 753" strokeDasharray="10 4" strokeWidth="5" />
      <path d="M580 386h18l-20 150z" fill="#cfcfcf" />
      <path d="M580 386l-6 234" strokeWidth="4" />
      <path d="M600 400h54l-47 397-50-7z" fill="#4c4c4f" />
      <path d="M604 400h27l-55 393-19-3zM636 400h18l-47 397-19-2z" fill="#37373a" />
      <path d="M604 405 558 789" strokeDasharray="10 4" strokeWidth="5" />

      {/* left bracket */}
      <path d="M200 52l-7 100-30 228 5-200z" fill="#555250" />
      <path d="M195 152l63 8-30 224-65-4z" fill="#383635" />
      <path d="M258 160h48v78l-14-4-8-30h-28z" fill="#1d1d1d" />
      <path d="M262 170h14M284 170h12M260 184h8M276 182h16M262 197h18M288 196h14M294 208v16" stroke="#ddd" strokeWidth="5" />
      <path d="M200 52l108 10-3 99-109-9z" fill="#dcd7d2" />
      <ellipse cx="285" cy="79" rx="5" ry="3" fill="#111" />
      <ellipse cx="283" cy="140" rx="5" ry="3" fill="#111" />

      {/* front roller */}
      <path d="M318 157l310 30-6 78-308-27z" fill="url(#roller)" />

      {/* motor and gear box */}
      <path d="M448 300l8-14h14v62h-16l-8-12z" fill="#bbb" />
      <path d="M456 288v58M448 318h16" />
      <path d="M480 262l122 10-11 112-118-8q-16-4-14-56t21-58z" fill="url(#motor)" />
      <path d="M484 263q-16 4-18 57t10 56" fill="none" />
      <path d="M602 256l74 4-5 63-73-6z" fill="#fdfdfd" />
      <path d="M598 317l73 6-9 92-74-7z" fill="#7f7d80" />

      {/* right bracket and cover */}
      <path d="M632 197h56v66l-60-4z" fill="#1d1d1d" />
      <path d="M640 204h8M656 205h14M636 220h14M660 219h8M676 221h10M640 234h16M664 234h14M656 248h12" stroke="#ddd" strokeWidth="5" />
      <path d="M692 201l60 5-26 227-64-6z" fill="#383635" />
      <path d="M757 103l-31 330 26-227z" fill="#555250" />
      <path d="M643 95l114 8-5 103-112-9z" fill="#dcd7d2" />
      <ellipse cx="667" cy="115" rx="5" ry="3" fill="#111" />
      <ellipse cx="665" cy="177" rx="5" ry="3" fill="#111" />
      <path d="M690 270v6M687 325v6M680 346v6M678 400v6" strokeWidth="5" />
    </g>
  )
}

function ConveyorModel() {
  return (
    <svg viewBox="0 0 780 1950" className="absolute top-[62px] left-[474px] h-[650px] w-[260px]" role="img" aria-label="输送机构">
      <defs>
        <linearGradient id="roller" x1="0.050" y1="0" x2="0" y2="1">
          <stop offset="0" stopColor="#3aac12" />
          <stop offset=".25" stopColor="#43ae20" />
          <stop offset=".68" stopColor="#0b3a00" />
          <stop offset=".8" stopColor="#0f4a00" />
          <stop offset="1" stopColor="#2c9a08" />
        </linearGradient>
        <linearGradient id="motor" x1="0.060" y1="0" x2="0" y2="1">
          <stop offset="0" stopColor="#efefef" />
          <stop offset=".35" stopColor="#fdfdfd" />
          <stop offset=".6" stopColor="#c2c2c2" />
          <stop offset=".75" stopColor="#8d8d8d" />
          <stop offset="1" stopColor="#e6e6e6" />
        </linearGradient>
      </defs>
      <TopRails />
      <LowerFrame />
    </svg>
  )
}

function Triad() {
  return (
    <svg viewBox="0 0 90 70" className="absolute bottom-4 left-6 h-[70px] w-[90px]" aria-hidden="true">
      <text x="22" y="32" fontSize="11" fill="#e02020">X</text>
      <path d="M21 36l5-5 5 4v8l-6 2-4-3z" fill="#c81c1c" />
      <path d="M26 53l3-25" stroke="#155a1b" strokeWidth="5" />
      <path d="M29 20l5.500 14q-6 3-11 0z" fill="#1d7a26" />
      <path d="M29 21v-3" stroke="#1b9a28" />
      <path d="M27 54l27 2" stroke="#2a2ab8" strokeWidth="4" />
      <path d="M64 57l-12-5v10z" fill="#1c1cc0" />
      <text x="26" y="21" fontSize="11" fill="#12861c">Y</text>
      <text x="64" y="62" fontSize="13" fill="#2020e0">Z</text>
    </svg>
  )
}

function Viewport() {
  return (
    <section className="relative min-w-0 flex-1 overflow-hidden bg-[#c5c9d4]">
      <div className="flex justify-center gap-2 pt-[7px] pl-[197px]">
        {viewTools.map((tool) => (
          <button key={tool.label} type="button" aria-label={tool.label} className="flex items-center">
            <Icon name={tool.icon} />
            {tool.caret && <Caret className="ml-[9px] text-[#85888f]" />}
          </button>
        ))}
      </div>
      <ConveyorModel />
      <Triad />
      <p className="absolute right-4 bottom-1.5 text-[20px] leading-6 text-[#8b8f98]">CSDN @技术死肥仔</p>
    </section>
  )
}

export default function App() {
  return (
    <div className="flex min-h-screen flex-col overflow-hidden bg-[#f7f7f7] font-['Open_Sans','Noto_Sans_CJK_SC',sans-serif]">
      <header>
        <Ribbon />
        <div className="flex h-[29px] border-t border-b border-t-[#8a8a8a] border-b-[#3a3a3a] bg-[#e4e4e4]" role="tablist">
          {commandTabs.map((tab, i) => (
            <button
              key={tab.label}
              type="button"
              role="tab"
              aria-selected={i === 0}
              className={clsx(
                'flex shrink-0 items-center justify-center border-r border-[#8a8a8a] pb-px leading-6 whitespace-nowrap text-[#222]',
                i > 0 && 'bg-[#d2d2d2]',
                tab.className,
              )}
            >
              {tab.label}
            </button>
          ))}
        </div>
      </header>

      <main className="flex flex-1">
        <div className="w-[78px] shrink-0">
          <div className="flex items-start pb-px">
            <ToolColumn tools={featureTools} className="w-[46px] border-r border-b" />
            <ToolColumn tools={blockTools} className="w-[30px] border-b pl-[7px]" />
          </div>
          <ToolColumn tools={referenceTools} className="w-[27px] border-r border-b" />
        </div>

        <div className="flex min-w-0 flex-1 flex-col border-l-2 border-black">
          <div className="flex h-[37px] items-center gap-1 bg-linear-to-b from-[#9ab4d2] to-[#b9d1ea] pt-1.5 pl-[11px]">
            <Icon name="assembly" />
            <h1 className="text-[15px] leading-6 text-[#111]">PTC-001 输送机构 *</h1>
          </div>
          <div className="flex flex-1 bg-[#b9d1ea]">
            <div className="w-[7px] shrink-0">
              <div className="h-[90px] bg-linear-to-b from-[#b9d1ea] to-[#dfeaf6]" />
            </div>
            <FeaturePanel />
            <Viewport />
          </div>
        </div>
      </main>
    </div>
  )
}
